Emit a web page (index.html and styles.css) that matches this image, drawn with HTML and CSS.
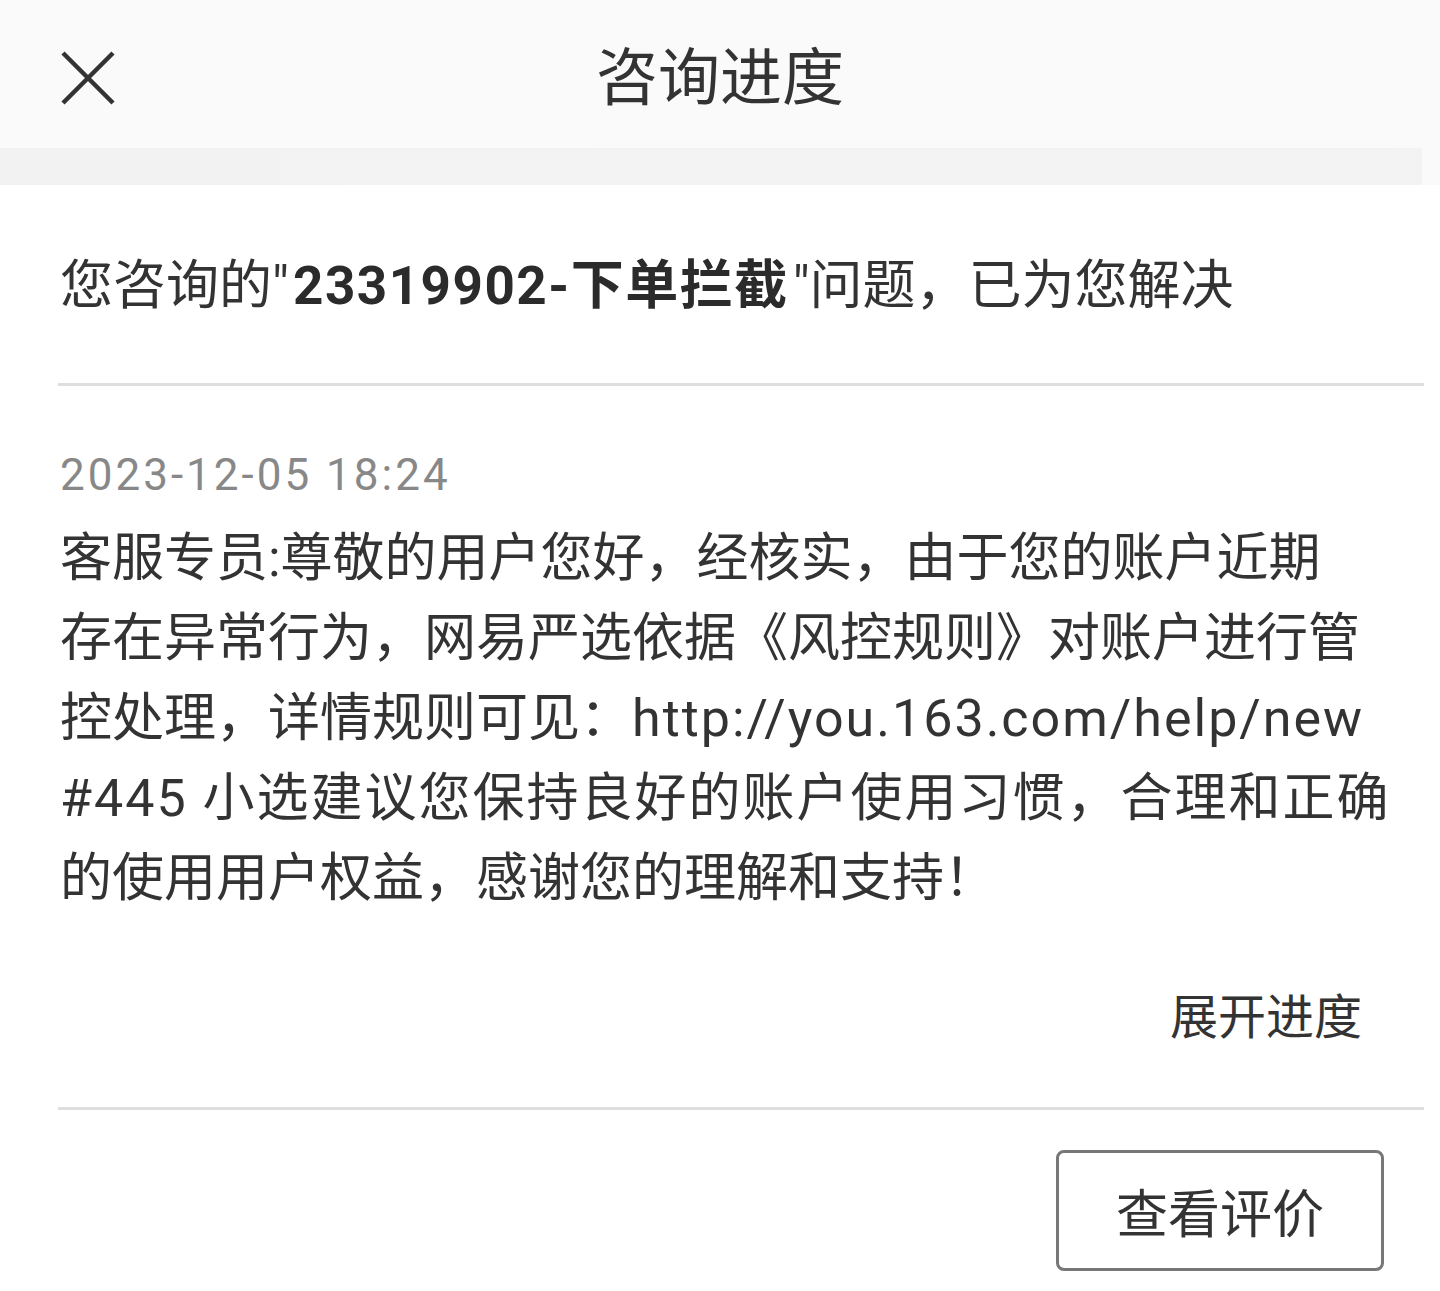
FILE: index.html
```html
<!DOCTYPE html>
<html lang="zh-CN">

<head>
    <meta charset="UTF-8">
    <meta name="viewport" content="width=device-width, initial-scale=1.0">
    <title>咨询进度</title>
    <link rel="stylesheet" href="styles.css">
</head>

<body>
    <div class="header">
        <div class="close">
            <svg width="56" height="56" viewBox="0 0 56 56">
                <path d="M3 3 L53 53 M53 3 L3 53" stroke="#333" stroke-width="4.5" fill="none" />
            </svg>
        </div>
        <div class="title">咨询进度</div>
    </div>
    <div class="shade"></div>

    <div class="summary">您咨询的"<b>23319902-下单拦截</b>"问题，已为您解决</div>
    <div class="line"></div>

    <div class="record">
        <div class="time">2023-12-05 18:24</div>
        <div class="msg">客服专员:尊敬的用户您好，经核实，由于您的账户近期<br>存在异常行为，网易严选依据《风控规则》对账户进行管<br>控处理，详情规则可见：<span class="link">http://you.163.com/help/new<br>#445</span><span class="wide"> 小选建议您保持良好的账户使用习惯，合理和正确</span><br>的使用用户权益，感谢您的理解和支持！</div>
        <div class="more">展开进度</div>
    </div>
    <div class="line"></div>

    <div class="actions">
        <div class="btn">查看评价</div>
    </div>
</body>

</html>
```

FILE: styles.css
```css
body {
    margin: 0;
    background-color: #fff;
    color: #333;
    font-family: Roboto, "Noto Sans CJK SC", sans-serif;
}

.header {
    height: 148px;
    background-color: #fafafa;
    position: relative;
    display: flex;
    align-items: center;
    justify-content: center;
}

.close {
    position: absolute;
    left: 60px;
    top: 50px;
    width: 56px;
    height: 56px;
}

.title {
    font-size: 62px;
    line-height: 80px;
    margin-top: 10px;
}

.shade {
    height: 37px;
    background: linear-gradient(to right, #f2f2f2 0, #f3f3f3 1422px, #fafafa 1422px);
}

.summary {
    padding: 61px 0 0 60px;
    height: 198px;
    box-sizing: border-box;
    font-size: 53px;
    line-height: 80px;
    white-space: nowrap;
}

.summary b {
    font-weight: bold;
    color: #2b2b2b;
    letter-spacing: 1.5px;
    margin: 0 4px;
}

.line {
    margin-left: 58px;
    width: 1366px;
    height: 3px;
    background-color: #dedede;
}

.record {
    padding: 59px 0 0 60px;
    height: 721px;
    box-sizing: border-box;
}

.time {
    font-size: 44px;
    line-height: 60px;
    color: #888;
    letter-spacing: 3px;
}

.msg {
    margin-top: 14px;
    font-size: 52px;
    line-height: 80px;
    white-space: nowrap;
}

.msg .link {
    letter-spacing: 2px;
}

.msg .wide {
    letter-spacing: 2px;
}

.more {
    margin-top: 64px;
    padding-right: 78px;
    text-align: right;
    font-size: 48px;
    line-height: 70px;
}

.actions {
    display: flex;
    justify-content: flex-end;
    padding: 40px 56px 0 0;
}

.btn {
    width: 328px;
    height: 121px;
    box-sizing: border-box;
    border: 3px solid #777;
    border-radius: 8px;
    display: flex;
    align-items: center;
    justify-content: center;
    font-size: 52px;
}
```
